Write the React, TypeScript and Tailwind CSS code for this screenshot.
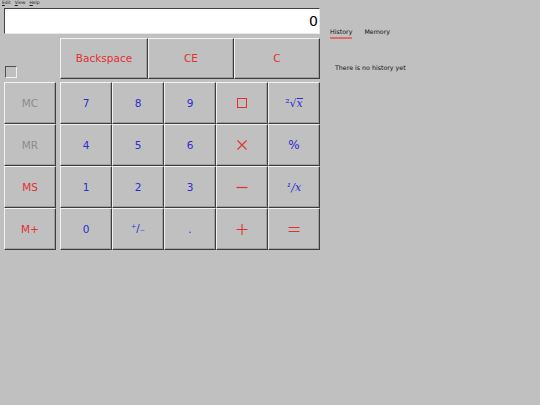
import React from "react";

const btn =
  "flex items-center justify-center bg-[#c0c0c0] border-t border-l border-t-[#f2f2f2] border-l-[#f2f2f2] border-b border-r border-b-[#3c3c3c] border-r-[#3c3c3c] shadow-[inset_-1px_-1px_0_#a0a0a0] text-[10.5px] leading-none";

const red = "text-[#e2302f]";
const blue = "text-[#2c2cd4]";
const gray = "text-[#8c8c8c]";

function Key({ children, cls }: { children: React.ReactNode; cls: string }) {
  return <div className={`${btn} ${cls} w-[52px] h-[42px]`}>{children}</div>;
}

export default function App() {
  const font = { fontFamily: '"DejaVu Sans", Verdana, sans-serif' };
  const serif = { fontFamily: '"DejaVu Serif", "Liberation Serif", serif' };
  return (
    <div className="w-[540px] h-[405px] bg-[#c0c0c0] flex overflow-hidden" style={font}>
      <div className="w-[320px] flex flex-col">
        <div className="h-[8px] pl-[2px] flex gap-[4px] items-start text-[4.5px] leading-[6px] text-[#222]">
          <span><span className="underline">E</span>dit</span>
          <span><span className="underline">V</span>iew</span>
          <span><span className="underline">H</span>elp</span>
        </div>
        <div className="ml-[4px] w-[316px] h-[26px] bg-white border-t border-l border-t-[#404040] border-l-[#404040] border-b border-r border-b-[#e8e8e8] border-r-[#e8e8e8] flex items-center justify-end pr-[1px] text-[14px] text-black">
          0
        </div>
        <div className="mt-[4px] flex h-[41px]">
          <div className="w-[60px] flex items-end pl-[5px] pb-[1px]">
            <div className="w-[12px] h-[12px] border-t border-l border-t-[#505050] border-l-[#505050] border-b border-r border-b-[#f0f0f0] border-r-[#f0f0f0]" />
          </div>
          <div className={`${btn} ${red} w-[88px] h-[41px]`}>Backspace</div>
          <div className={`${btn} ${red} w-[86px] h-[41px]`}>CE</div>
          <div className={`${btn} ${red} w-[86px] h-[41px]`}>C</div>
        </div>
        <div className="mt-[3px] flex">
          <div className="ml-[4px] w-[52px] flex flex-col">
            <Key cls={gray}>MC</Key>
            <Key cls={gray}>MR</Key>
            <Key cls={red}>MS</Key>
            <Key cls={red}>M+</Key>
          </div>
          <div className="ml-[4px] grid grid-cols-[repeat(5,52px)]">
            <Key cls={blue}>7</Key>
            <Key cls={blue}>8</Key>
            <Key cls={blue}>9</Key>
            <Key cls={red}>
              <div className="w-[10px] h-[10px] border border-[#e2302f]" />
            </Key>
            <Key cls={blue}>
              <span className="text-[11px] leading-none flex items-start" style={serif}>
                <span>²√</span>
                <span className="italic border-t border-[#2c2cd4] leading-[10px]">x</span>
              </span>
            </Key>
            <Key cls={blue}>4</Key>
            <Key cls={blue}>5</Key>
            <Key cls={blue}>6</Key>
            <Key cls={red}>
              <svg width="12" height="12" viewBox="0 0 12 12">
                <path d="M1.5 1.5 L10.5 10.5 M10.5 1.5 L1.5 10.5" stroke="#e2302f" strokeWidth="1.1" />
              </svg>
            </Key>
            <Key cls={blue}>
              <span className="text-[12px]">%</span>
            </Key>
            <Key cls={blue}>1</Key>
            <Key cls={blue}>2</Key>
            <Key cls={blue}>3</Key>
            <Key cls={red}>
              <svg width="12" height="12" viewBox="0 0 12 12">
                <path d="M0.5 6.5 H11.5" stroke="#e2302f" strokeWidth="1.2" />
              </svg>
            </Key>
            <Key cls={blue}>
              <span className="text-[11px] italic leading-none" style={serif}>¹/x</span>
            </Key>
            <Key cls={blue}>0</Key>
            <Key cls={blue}>
              <span className="text-[10px] leading-none">⁺/₋</span>
            </Key>
            <Key cls={blue}>.</Key>
            <Key cls={red}>
              <svg width="12" height="12" viewBox="0 0 12 12">
                <path d="M0.5 6.5 H11.5 M6 1 V12" stroke="#e2302f" strokeWidth="1.1" />
              </svg>
            </Key>
            <Key cls={red}>
              <svg width="12" height="12" viewBox="0 0 12 12">
                <path d="M0.5 4.5 H11.5 M0.5 8.5 H11.5" stroke="#e2302f" strokeWidth="1.2" />
              </svg>
            </Key>
          </div>
        </div>
      </div>
      <div className="flex-1 flex flex-col pl-[10px] pt-[28px] text-[6.3px] text-[#111]">
        <div className="flex gap-[12px]">
          <div className="flex flex-col">
            <span className="leading-[8px]">History</span>
            <div className="mt-[1px] h-[2px] bg-[#e06a6a]" />
          </div>
          <span className="leading-[8px]">Memory</span>
        </div>
        <div className="mt-[25px] pl-[5px] leading-[8px]">There is no history yet</div>
      </div>
    </div>
  );
}
